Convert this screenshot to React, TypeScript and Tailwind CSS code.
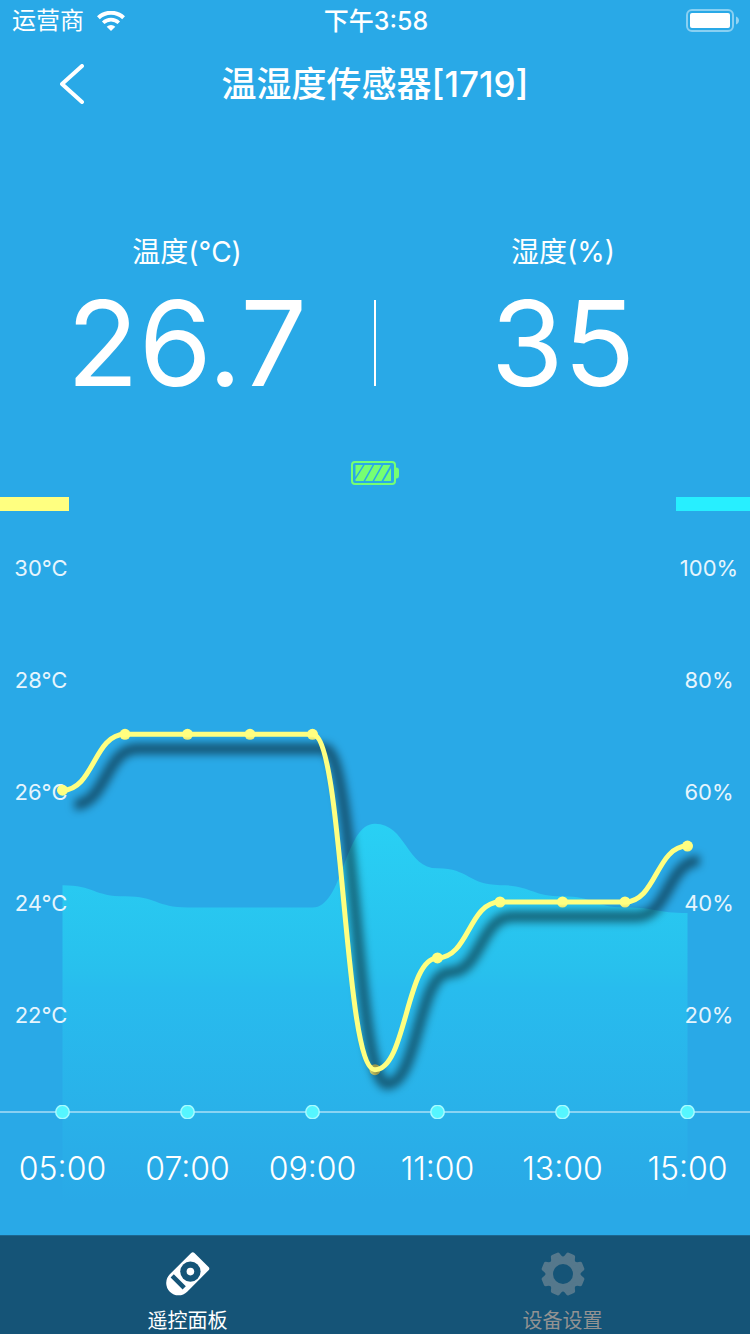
import React from 'react';

const X_STEP = 62.5;
const temperatures = [26, 27, 27, 27, 27, 21, 23, 24, 24, 24, 25];
const humidities = [43, 41, 39, 39, 39, 54, 46, 43, 41, 39, 38];
const hours = ['05:00', '07:00', '09:00', '11:00', '13:00', '15:00'];
const temperatureTicks = ['30°C', '28°C', '26°C', '24°C', '22°C'];
const humidityTicks = ['100%', '80%', '60%', '40%', '20%'];

type Point = [number, number];

const xAt = (i: number) => X_STEP * (i + 1);
const temperaturePoints: Point[] = temperatures.map((t, i) => [xAt(i), 391 + (24 - t) * 55.9]);
const humidityPoints: Point[] = humidities.map((h, i) => [xAt(i), 614.5 - h * 5.59]);

function smoothPath(points: Point[]) {
  return points
    .map(([x, y], i) => {
      if (i === 0) return `M${x} ${y}`;
      const [px, py] = points[i - 1];
      const mid = (px + x) / 2;
      return `C${mid} ${py} ${mid} ${y} ${x} ${y}`;
    })
    .join('');
}

function gearPath() {
  const at = (r: number, deg: number) => {
    const a = (deg * Math.PI) / 180;
    return `${(23 + r * Math.cos(a)).toFixed(2)} ${(23 + r * Math.sin(a)).toFixed(2)}`;
  };
  let d = '';
  for (let k = 0; k < 8; k++) {
    const c = 22.5 + 45 * k;
    d += `${k === 0 ? 'M' : 'L'}${at(20, c - 8)}L${at(20, c + 8)}`;
    d += `C${at(18, c + 11)} ${at(15.5, c + 14)} ${at(15.5, c + 22.5)}`;
    d += `C${at(15.5, c + 31)} ${at(18, c + 34)} ${at(20, c + 37)}`;
  }
  return d + 'Z';
}

function WifiIcon() {
  return (
    <svg className="h-5 w-7" viewBox="0 0 28 20" fill="none" aria-hidden="true">
      <path d="M1.4 6.8A18.2 18.2 0 0 1 26.6 6.8" stroke="#fff" strokeWidth="4" />
      <path d="M6.2 11.7A11.3 11.3 0 0 1 21.8 11.7" stroke="#fff" strokeWidth="3.6" />
      <path d="M14 20L9.7 15.8A6.2 6.2 0 0 1 18.3 15.8Z" fill="#fff" />
    </svg>
  );
}

function PhoneBattery() {
  return (
    <svg className="h-6 w-[54px]" viewBox="0 0 54 24" fill="none" aria-hidden="true">
      <rect x="1" y="1" width="46" height="21" rx="5" stroke="#fff" strokeOpacity=".45" strokeWidth="2" />
      <rect x="4" y="4" width="40" height="15" rx="2" fill="#fff" />
      <path d="M50 7.5C52.2 8.5 53 10 53 11.5S52.2 14.5 50 15.5Z" fill="#fff" fillOpacity=".5" />
    </svg>
  );
}

function SensorBattery() {
  return (
    <svg className="h-6 w-12" viewBox="0 0 48 24" fill="none" aria-label="电池电量" role="img">
      <rect x="1" y="1" width="43" height="22" rx="3" stroke="#76ff72" strokeWidth="2" />
      <path d="M44 6.500H46Q48 7 48 9V15Q48 17 46 17.500H44Z" fill="#76ff72" />
      <g fill="#76ff72">
        <path d="M4.500 4H12L4.500 16Z" />
        <path d="M13.700 4H21.500L12.500 20H4.500V18.500Z" />
        <path d="M23.200 4H30.500L21.500 20H14.200Z" />
        <path d="M32.200 4H39.500L30.500 20H23.200Z" />
        <path d="M40 7V20H32.500Z" />
      </g>
    </svg>
  );
}

function RemoteIcon() {
  return (
    <svg className="h-[46px] w-[46px]" viewBox="0 0 46 46" fill="none" aria-hidden="true">
      <path
        transform="translate(13.5 32) rotate(-45)"
        d="M0-12.300H30.200Q32.500-12.300 32.500-10V10Q32.500 12.300 30.200 12.300H0A12.300 12.300 0 0 1 0-12.300Z"
        fill="#fff"
      />
      <circle cx="25.400" cy="20.600" r="10.200" fill="#155477" />
      <circle cx="25.400" cy="20.600" r="3.800" fill="#fff" />
      <path d="M7.200 24.900L19.200 36.900" stroke="#155477" strokeWidth="4.500" />
    </svg>
  );
}

function GearIcon() {
  return (
    <svg className="h-[46px] w-[46px]" viewBox="0 0 46 46" fill="none" aria-hidden="true">
      <path d={gearPath()} fill="#55788c" stroke="#55788c" strokeWidth="4" strokeLinejoin="round" />
      <circle cx="23" cy="23" r="10" fill="#155477" />
    </svg>
  );
}

function Reading({ label, value }: { label: string; value: string }) {
  return (
    <div className="flex flex-1 flex-col items-center">
      <h2 className="text-[28px] leading-10">{label}</h2>
      <p className="text-[118px] leading-[142px]">{value}</p>
    </div>
  );
}

function Ticks({ items }: { items: string[] }) {
  return (
    <ul className="flex w-[82px] flex-col justify-between text-center text-[22px] leading-6 text-[#e6f5fd]">
      {items.map((t) => (
        <li key={t}>{t}</li>
      ))}
    </ul>
  );
}

function Chart() {
  const line = smoothPath(temperaturePoints);
  const area = `${smoothPath(humidityPoints)}V724H${X_STEP}Z`;
  return (
    <section className="grid" aria-label="温湿度曲线">
      <svg className="h-auto w-full [grid-area:1/1]" viewBox="0 0 750 724" fill="none" aria-hidden="true">
        <defs>
          <linearGradient id="humidity" gradientUnits="userSpaceOnUse" x1="0" x2="0" y1="313" y2="724">
            <stop offset="0" stopColor="#29d0f4" />
            <stop offset=".36" stopColor="#28c0ed" />
            <stop offset=".4" stopColor="#28bcee" />
            <stop offset=".7" stopColor="#29b1e9" />
            <stop offset=".92" stopColor="#29a9e7" />
          </linearGradient>
        </defs>
        <path d={area} fill="url(#humidity)" />
      </svg>
      <div className="z-10 flex justify-between pt-[45px] pb-[208px] [grid-area:1/1]">
        <Ticks items={temperatureTicks} />
        <Ticks items={humidityTicks} />
      </div>
      <ol className="z-10 grid grid-cols-6 self-end pb-[46px] text-center text-[32px] leading-10 font-light [grid-area:1/1]">
        {hours.map((h) => (
          <li key={h}>{h}</li>
        ))}
      </ol>
      <svg className="z-20 h-auto w-full [grid-area:1/1]" viewBox="0 0 750 724" fill="none" aria-hidden="true">
        <defs>
          <filter id="blur" filterUnits="userSpaceOnUse" x="0" y="180" width="750" height="440">
            <feGaussianBlur stdDeviation="4.500" />
          </filter>
          <clipPath id="axisClip">
            <rect x="0" y="594" width="750" height="14" />
          </clipPath>
        </defs>
        {temperaturePoints.map(([x, y]) => (
          <circle key={x} cx={x} cy={y} r="5.500" fill="#ffff80" />
        ))}
        <path
          d={line}
          transform="translate(12 14.500)"
          stroke="#000"
          strokeOpacity=".5"
          strokeWidth="11"
          filter="url(#blur)"
        />
        <path d={line} stroke="#ffff80" strokeWidth="5" />
        <path d="M0 601H750" stroke="#fff" strokeOpacity=".45" strokeWidth="2" />
        <g clipPath="url(#axisClip)">
          {hours.map((h, i) => (
            <circle key={h} cx={X_STEP + i * 125} cy="601" r="6.700" fill="#55f6ff" stroke="#a6faff" strokeWidth="1.500" />
          ))}
        </g>
      </svg>
    </section>
  );
}

export default function App() {
  return (
    <div className="flex min-h-screen flex-col bg-[#29a9e7] font-['Inter','Noto_Sans_CJK_SC',sans-serif] text-white">
      <div className="grid h-10 grid-cols-[1fr_auto_1fr] items-center pt-[2px] pr-[10px] pl-3 text-[24px] leading-8">
        <div className="flex items-center gap-[13px]">
          <span>运营商</span>
          <WifiIcon />
        </div>
        <span className="text-[25px] font-medium">下午3:58</span>
        <div className="flex justify-end">
          <PhoneBattery />
        </div>
      </div>

      <header className="grid h-[88px] grid-cols-[120px_1fr_120px] items-center">
        <button type="button" aria-label="返回" className="flex h-full items-center justify-end pr-9">
          <svg className="h-10 w-6" viewBox="0 0 24 40" fill="none" aria-hidden="true">
            <path d="M22 2L2 20L22 38" stroke="#fff" strokeWidth="4" strokeLinecap="round" strokeLinejoin="round" />
          </svg>
        </button>
        <h1 className="text-center text-[35px] leading-10 font-medium">温湿度传感器[1719]</h1>
      </header>

      <main className="flex flex-1 flex-col">
        <div className="flex items-end pt-[104px]">
          <Reading label="温度(°C)" value="26.7" />
          <div className="mb-7 h-[86px] w-[2px] bg-white" />
          <Reading label="湿度(%)" value="35" />
        </div>
        <div className="flex justify-center pt-[47px]">
          <SensorBattery />
        </div>
        <div className="flex justify-between pt-3">
          <div className="h-[14px] w-[69px] bg-[#ffff80]" />
          <div className="h-[14px] w-[74px] bg-[#27efff]" />
        </div>
        <Chart />
      </main>

      <nav className="flex border-t border-[#1c6690] bg-[#155477] pt-[15px] text-[20px] leading-[26px]">
        <a href="#panel" aria-current="page" className="flex flex-1 flex-col items-center gap-[11px]">
          <RemoteIcon />
          <span>遥控面板</span>
        </a>
        <a href="#settings" className="flex flex-1 flex-col items-center gap-[11px] text-[#929292]">
          <GearIcon />
          <span>设备设置</span>
        </a>
      </nav>
    </div>
  );
}
